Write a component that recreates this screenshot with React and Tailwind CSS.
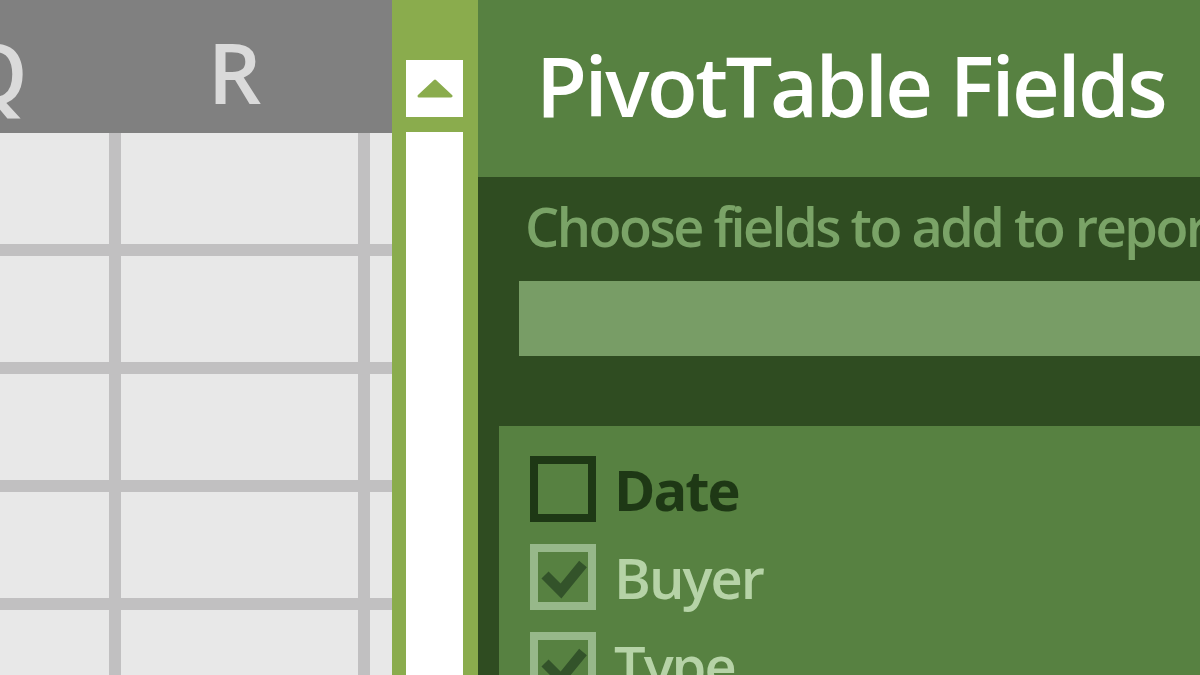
import React from "react";

const rows = [111, 106, 106, 106, 65];
const cols = [109, 237, 22];

const fields = [
  { name: "Date", checked: false },
  { name: "Buyer", checked: true },
  { name: "Type", checked: true },
];

const FieldBox = ({ checked }) => (
  <div
    className={`relative w-[66px] h-[66px] shrink-0 border-[8px] ${
      checked ? "border-[#97b88a]" : "border-[#1e3815]"
    }`}
  >
    {checked && (
      <svg
        className="absolute -left-[8px] -top-[8px]"
        width="66"
        height="66"
        viewBox="0 0 66 66"
      >
        <polyline
          points="15,31 31,47 53,20"
          fill="none"
          stroke="#33532a"
          strokeWidth="10"
        />
      </svg>
    )}
  </div>
);

const Sheet = () => (
  <div className="w-[392px] shrink-0 flex flex-col bg-[#c1c0c1] overflow-hidden">
    <div className="h-[133px] shrink-0 bg-[#808080] flex items-center -ml-[120px]">
      <div className="w-[229px] text-center text-[84px] leading-none font-semibold text-[#dadada] pt-[10px]">
        Q
      </div>
      <div className="w-[12px]" />
      <div className="w-[237px] text-center text-[84px] leading-none font-semibold text-[#dadada] pt-[10px] pr-[10px]">
        R
      </div>
    </div>
    <div className="grid grid-cols-[109px_237px_22px] gap-[12px]">
      {rows.map((h, r) =>
        cols.map((w, c) => (
          <div
            key={`${r}-${c}`}
            className="bg-[#e8e8e8]"
            style={{ height: h }}
          />
        ))
      )}
    </div>
  </div>
);

const Scrollbar = () => (
  <div className="w-[86px] shrink-0 bg-[#8aac4d] pl-[14px] pt-[60px] flex flex-col gap-[15px]">
    <div className="w-[57px] h-[57px] bg-white flex items-center justify-center">
      <svg width="36" height="20" viewBox="0 0 36 20">
        <polygon
          points="18,2 34,17 2,17"
          fill="#8aac4d"
          stroke="#8aac4d"
          strokeWidth="3"
          strokeLinejoin="round"
        />
      </svg>
    </div>
    <div className="w-[57px] flex-1 bg-white" />
  </div>
);

export default function App() {
  return (
    <div
      className="w-[1200px] h-[675px] flex overflow-hidden"
      style={{ fontFamily: '"Open Sans", "Noto Sans", sans-serif' }}
    >
      <Sheet />
      <Scrollbar />
      <div className="flex-1 flex flex-col bg-[#2f4c21] overflow-hidden">
        <div className="h-[177px] shrink-0 bg-[#578141] pl-[58px] flex items-center">
          <h1 className="text-[83px] leading-none text-white font-semibold tracking-[-2.5px] whitespace-nowrap -mt-[8px]">
            PivotTable Fields
          </h1>
        </div>
        <div className="h-[249px] shrink-0 flex flex-col pl-[41px]">
          <p className="pl-[6px] pt-[22px] text-[54px] leading-none font-semibold text-[#7aa367] whitespace-nowrap tracking-[-2.5px]">
            Choose fields to add to report:
          </p>
          <div className="mt-[28px] h-[75px] bg-[#789d66]" />
        </div>
        <div className="flex-1 ml-[21px] bg-[#578141] pl-[31px] pt-[30px] flex flex-col gap-[22px]">
          {fields.map((f) => (
            <div key={f.name} className="flex items-center gap-[18px] h-[66px]">
              <FieldBox checked={f.checked} />
              <span
                className={`text-[56px] leading-none whitespace-nowrap tracking-[-2px] ${
                  f.checked
                    ? "font-semibold text-[#b6d3a7]"
                    : "font-bold text-[#1e3815]"
                }`}
              >
                {f.name}
              </span>
            </div>
          ))}
        </div>
      </div>
    </div>
  );
}
